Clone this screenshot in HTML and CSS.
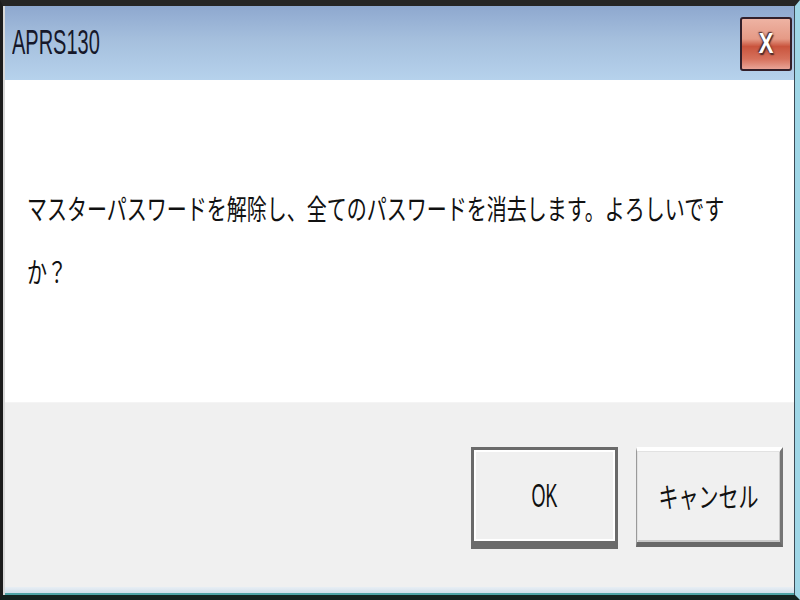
FILE: index.html
```html
<!DOCTYPE html>
<html lang="ja">
<head>
<meta charset="utf-8">
<title>APRS130</title>
<link rel="stylesheet" href="styles.css">
</head>
<body>
<div class="window">
  <div class="frame">
    <div class="titlebar">
      <span class="title">APRS130</span>
      <div class="close"><span class="close-x">X</span></div>
    </div>
    <div class="content">
      <div class="message">マスターパスワードを解除し、全てのパスワードを消去します。よろしいですか？</div>
    </div>
    <div class="footer">
      <button class="btn btn-default"><span class="btn-label latin">OK</span></button>
      <button class="btn btn-cancel"><span class="btn-label">キャンセル</span></button>
    </div>
    <div class="bottom-band"></div>
  </div>
</div>
</body>
</html>
```

FILE: styles.css
```css
html, body {
  margin: 0;
  padding: 0;
  background: #1a1a1a;
}
.window {
  width: 800px;
  height: 600px;
  box-sizing: border-box;
  border-top: 6px solid #262626;
  border-left: 3px solid #1c1c1c;
  border-right: 5px solid #9fd6e6;
  border-bottom: 5px solid #142220;
  overflow: hidden;
}
.frame {
  height: 100%;
  display: flex;
  flex-direction: column;
  border-left: 2px solid #d8d8d8;
  border-right: 1px solid #3a4a55;
  box-sizing: border-box;
}
.titlebar {
  height: 74px;
  flex: none;
  display: flex;
  align-items: center;
  justify-content: space-between;
  padding: 0 0 0 7px;
  background: linear-gradient(to bottom, #8ea8cf 0%, #a5bfdd 45%, #b6d2ec 100%);
}
.title {
  display: inline-block;
  font-family: "Liberation Sans", Arial, sans-serif;
  font-size: 20px;
  color: #16182a;
  transform: scaleY(1.75);
  margin-top: -2px;
}
.close {
  width: 48px;
  height: 50px;
  margin: 2px 2px 0 0;
  border: 2px solid #33202a;
  border-radius: 3px;
  display: flex;
  align-items: center;
  justify-content: center;
  background: linear-gradient(to bottom, #eeb3a3 0%, #e59a86 40%, #c9543d 55%, #d6715c 80%, #e9a497 100%);
}
.close-x {
  display: inline-block;
  font-family: "Liberation Sans", Arial, sans-serif;
  font-weight: bold;
  font-size: 22px;
  color: #ffffff;
  transform: scaleY(1.35);
  text-shadow: 0 0 2px #4a2a2a, 1px 1px 1px #4a2a2a, -1px -1px 1px #4a2a2a;
}
.content {
  flex: none;
  height: 323px;
  background: #ffffff;
  box-sizing: border-box;
  padding: 97px 0 0 22px;
  border-bottom: 1px solid #f4f4f4;
}
.message {
  width: 712px;
  font-family: "Noto Sans CJK JP", sans-serif;
  font-size: 20px;
  line-height: 45px;
  color: #111111;
  transform: scaleY(1.4);
  transform-origin: top left;
}
.footer {
  flex: 1;
  background: #f0f0f0;
  display: flex;
  justify-content: flex-end;
  align-items: flex-start;
  gap: 18px;
  padding: 44px 11px 0 0;
}
.btn {
  width: 147px;
  height: 102px;
  box-sizing: border-box;
  background: #f0f0f0;
  padding: 0;
  display: flex;
  align-items: center;
  justify-content: center;
  font: inherit;
}
.btn-default {
  border-style: solid;
  border-color: #6a6a6a;
  border-width: 3px 3px 8px 3px;
  box-shadow: inset 2px 2px 0 #ffffff, inset -2px -2px 0 #ffffff;
}
.btn-cancel {
  height: 100px;
  border-style: solid;
  border-width: 4px 3px 5px 1px;
  border-color: #ffffff #747474 #686868 #9a9a9a;
  box-shadow: inset 1px 1px 0 #e2e2e2, inset -1px -2px 0 #c8c8c8;
}
.btn-label {
  display: inline-block;
  font-family: "Noto Sans CJK JP", sans-serif;
  font-size: 20px;
  line-height: 24px;
  color: #111111;
  transform: scaleY(1.4);
}
.btn-label.latin {
  font-family: "Liberation Sans", Arial, sans-serif;
  font-size: 18px;
  transform: scaleY(1.8);
}
.bottom-band {
  flex: none;
  height: 8px;
  background: linear-gradient(to bottom, #e8eef4 0%, #d3e0ec 70%, #4fa3a6 75%, #4fa3a6 100%);
}
```
